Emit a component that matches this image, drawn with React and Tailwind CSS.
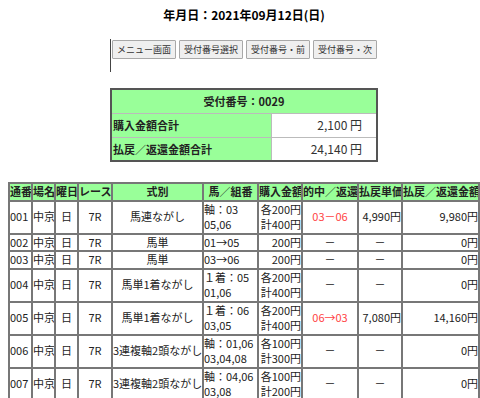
import React from "react";

const FONT = { fontFamily: '"Noto Sans CJK JP", "Noto Sans", sans-serif' };

const rows = [
  { no: "001", kind: "馬連ながし", horse: ["軸：03", "05,06"], buy: ["各200円", "計400円"], hit: "03－06", unit: "4,990円", pay: "9,980円" },
  { no: "002", kind: "馬単", horse: ["01→05"], buy: ["200円"], hit: "－", unit: "－", pay: "0円", right: true },
  { no: "003", kind: "馬単", horse: ["03→06"], buy: ["200円"], hit: "－", unit: "－", pay: "0円", right: true },
  { no: "004", kind: "馬単1着ながし", horse: ["１着：05", "01,06"], buy: ["各200円", "計400円"], hit: "－", unit: "－", pay: "0円" },
  { no: "005", kind: "馬単1着ながし", horse: ["１着：06", "03,05"], buy: ["各200円", "計400円"], hit: "06→03", unit: "7,080円", pay: "14,160円" },
  { no: "006", kind: "3連複軸2頭ながし", horse: ["軸：01,06", "03,04,08"], buy: ["各100円", "計300円"], hit: "－", unit: "－", pay: "0円" },
  { no: "007", kind: "3連複軸2頭ながし", horse: ["軸：04,06", "03,08"], buy: ["各100円", "計200円"], hit: "－", unit: "－", pay: "0円" },
];

const heads = ["通番", "場名", "曜日", "レース", "式別", "馬／組番", "購入金額", "的中／返還", "払戻単価", "払戻／返還金額"];
const widths = [23, 23, 23, 34, 91, 55, 44, 56, 44, 77];

const td = "border-2 border-[#777] p-0 align-middle whitespace-nowrap overflow-hidden";

export default function App() {
  return (
    <div className="w-[480px] h-[398px] overflow-hidden bg-white text-[#222]" style={FONT}>
      <div className="w-[488px] flex flex-col items-center">
        {/* title */}
        <div className="pt-[6px] text-[12px] font-bold text-black leading-[17px]">
          年月日：2021年09月12日(日)
        </div>

        {/* buttons */}
        <div className="mt-[16px] w-[268px] h-[33px] border-l border-[#444] flex items-start gap-[3px] pl-[1px] pt-[1px]">
          {["メニュー画面", "受付番号選択", "受付番号・前", "受付番号・次"].map((b) => (
            <button
              key={b}
              className="w-[64px] h-[19px] bg-[#efefef] border border-[#a8a8a8] rounded-[1px] text-[9px] text-[#333] leading-[17px] p-0"
            >
              {b}
            </button>
          ))}
        </div>

        {/* summary */}
        <table className="mt-[16px] w-[268px] border-collapse border-2 border-[#555] text-[11px]">
          <tbody>
            <tr className="h-[24px] bg-[#99ff99]">
              <td colSpan={2} className="border border-[#bbb] text-center font-bold">受付番号：0029</td>
            </tr>
            <tr className="h-[24px]">
              <td className="w-[160px] border border-[#bbb] bg-[#99ff99] font-bold pl-[1px]">購入金額合計</td>
              <td className="border border-[#bbb] text-right pr-[14px] text-[12px] text-[#333]">2,100 円</td>
            </tr>
            <tr className="h-[24px]">
              <td className="border border-[#bbb] bg-[#99ff99] font-bold pl-[1px]">払戻／返還金額合計</td>
              <td className="border border-[#bbb] text-right pr-[14px] text-[12px] text-[#333]">24,140 円</td>
            </tr>
          </tbody>
        </table>

        {/* detail table */}
        <table className="mt-[20px] w-[472px] table-fixed border-collapse border-2 border-[#777] text-[11px] leading-[15.5px]">
          <colgroup>
            {widths.map((w, i) => (
              <col key={i} style={{ width: w }} />
            ))}
          </colgroup>
          <thead>
            <tr className="bg-[#99ff99]">
              {heads.map((h) => (
                <th key={h} className={`${td} font-bold text-center`}>{h}</th>
              ))}
            </tr>
          </thead>
          <tbody>
            {rows.map((r) => (
              <tr key={r.no}>
                <td className={`${td} text-left`}>{r.no}</td>
                <td className={`${td} text-left`}>中京</td>
                <td className={`${td} text-center`}>日</td>
                <td className={`${td} text-center`}>7R</td>
                <td className={`${td} text-center`}>{r.kind}</td>
                <td className={`${td} text-left`}>
                  {r.horse.map((l) => (
                    <div key={l}>{l}</div>
                  ))}
                </td>
                <td className={`${td} text-right`}>
                  {r.buy.map((l) => (
                    <div key={l}>{l}</div>
                  ))}
                </td>
                <td className={`${td} text-center ${r.hit === "－" ? "" : "text-[#ff4444]"}`}>{r.hit}</td>
                <td className={`${td} ${r.unit === "－" ? "text-center" : "text-right"}`}>{r.unit}</td>
                <td className={`${td} text-right`}>{r.pay}</td>
              </tr>
            ))}
          </tbody>
        </table>
      </div>
    </div>
  );
}
